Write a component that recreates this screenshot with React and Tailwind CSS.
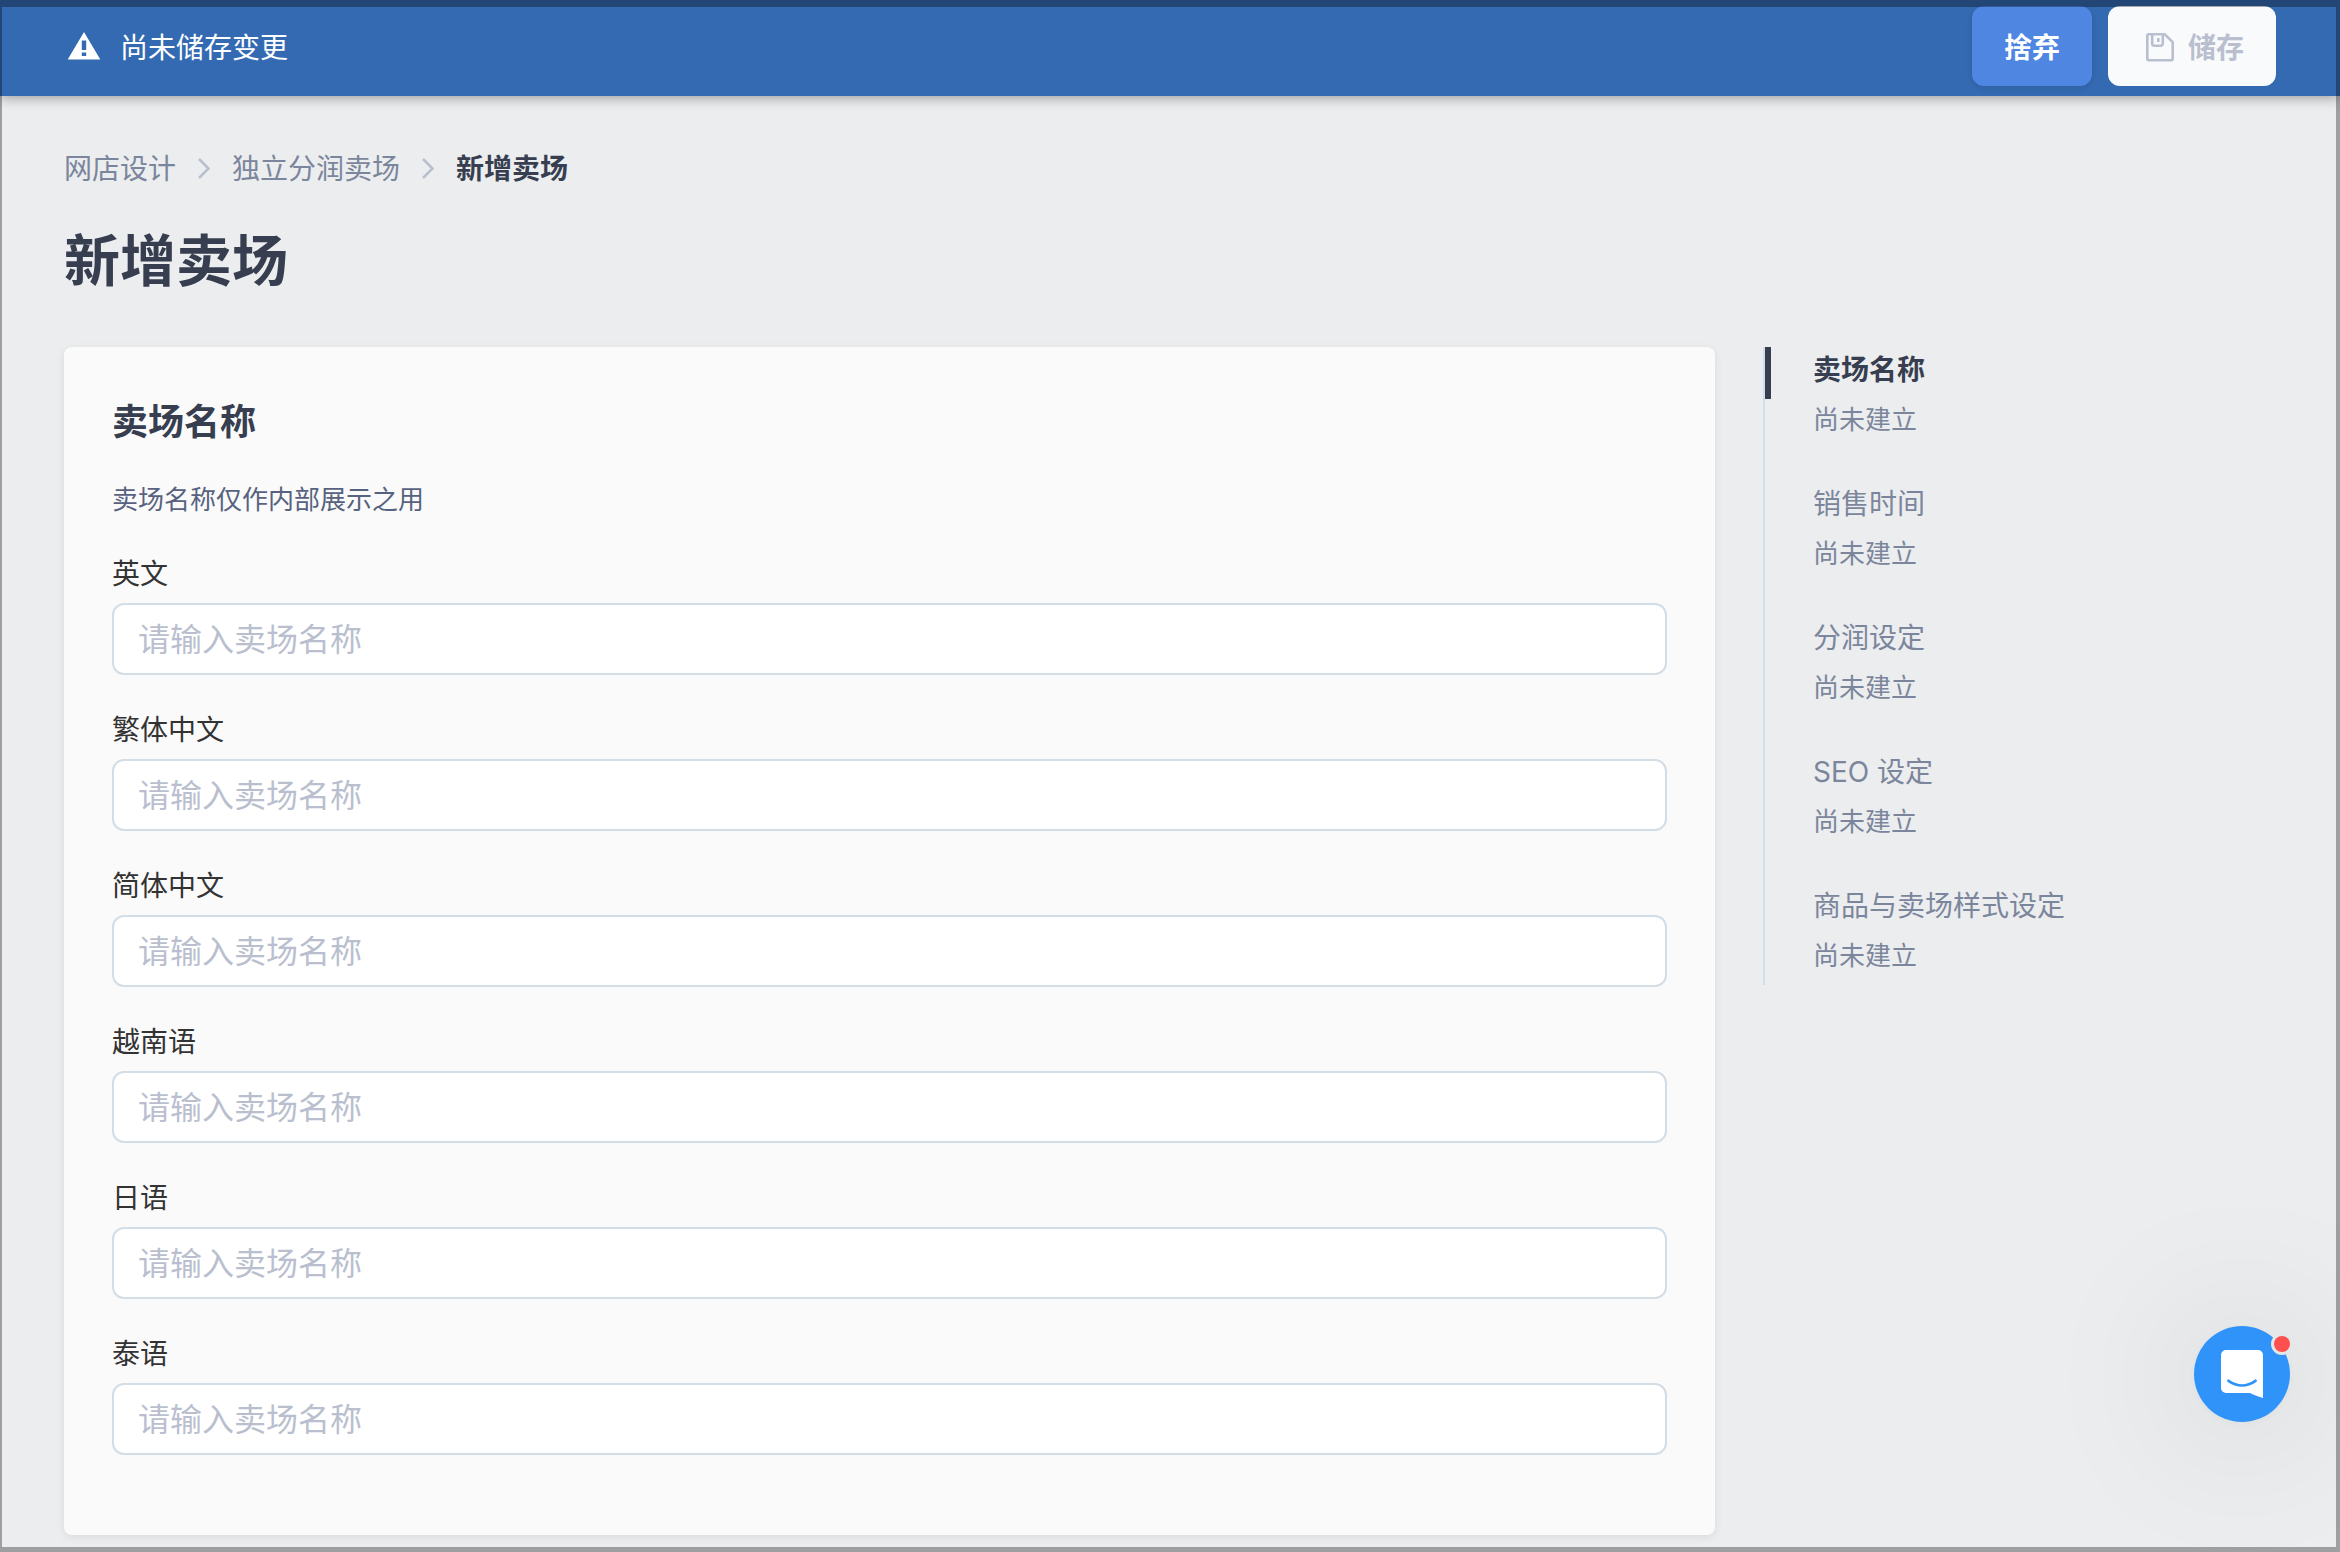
import { useState } from 'react';

// One text box per storefront language
const languages = [
  { id: 'en', label: '英文' },
  { id: 'zh-hant', label: '繁体中文' },
  { id: 'zh-hans', label: '简体中文' },
  { id: 'vi', label: '越南语' },
  { id: 'ja', label: '日语' },
  { id: 'th', label: '泰语' },
];

// Steps listed in the side navigation
const sections = [
  { id: 'name', title: '卖场名称', status: '尚未建立' },
  { id: 'time', title: '销售时间', status: '尚未建立' },
  { id: 'profit', title: '分润设定', status: '尚未建立' },
  { id: 'seo', title: 'SEO 设定', status: '尚未建立' },
  { id: 'style', title: '商品与卖场样式设定', status: '尚未建立' },
];

function WarningIcon() {
  return (
    <svg viewBox="0 0 40 40" className="size-10 shrink-0" aria-hidden="true">
      <path
        fill="#fff"
        fillRule="evenodd"
        d="M20 4 36.300 31.500H3.700L20 4ZM17.800 12.500v9.500h4.400v-9.500h-4.400Zm0 12v3.500h4.400v-3.500h-4.400Z"
      />
    </svg>
  );
}

function SaveIcon() {
  return (
    <svg
      viewBox="0 0 40 40"
      className="size-10 shrink-0"
      fill="none"
      stroke="currentColor"
      strokeWidth="2.600"
      strokeLinejoin="round"
      aria-hidden="true"
    >
      <path d="M8.800 6.300h16l7.900 7.900V30.500a1.800 1.800 0 0 1-1.800 1.800H8.800A1.800 1.800 0 0 1 7.300 30.500V8.100a1.800 1.800 0 0 1 1.500-1.800Z" />
      <path d="M12.200 6.500V15.500a2.300 2.300 0 0 0 2.300 2.300h6a2.300 2.300 0 0 0 2.300-2.300V6.500" />
      <path d="M18.300 10v4" />
    </svg>
  );
}

function Chevron() {
  return (
    <svg viewBox="0 0 56 40" className="h-10 w-14" fill="none" stroke="#b9bfce" strokeWidth="2.500" aria-hidden="true">
      <path d="m23 10 9.500 9.500L23 29" />
    </svg>
  );
}

function TopBar() {
  return (
    <header className="flex items-center justify-between bg-[#346ab2] px-16 pt-1.5 pb-2.5 shadow-[0_2px_12px_rgba(0,0,0,0.35)]">
      <p className="flex items-center gap-4 pt-1 text-[28px] leading-10 text-white">
        <WarningIcon />
        尚未储存变更
      </p>
      <div className="flex gap-4">
        <button
          type="button"
          className="h-20 rounded-xl bg-[#4e86e2] px-8 pt-1 text-[28px] leading-10 font-bold text-white shadow-[0_2px_6px_rgba(0,0,0,0.1)]"
        >
          捨弃
        </button>
        <button
          type="button"
          disabled
          className="flex h-20 items-center gap-2 rounded-xl bg-[#f9fafc] px-8 pt-1 text-[28px] leading-10 font-bold text-[#b9bfce]"
        >
          <SaveIcon />
          储存
        </button>
      </div>
    </header>
  );
}

function Breadcrumb() {
  return (
    <nav aria-label="breadcrumb">
      <ol className="flex items-center text-[28px] leading-10 text-[#7b869c]">
        <li>
          <a href="#design">网店设计</a>
        </li>
        <li>
          <Chevron />
        </li>
        <li>
          <a href="#stores">独立分润卖场</a>
        </li>
        <li>
          <Chevron />
        </li>
        <li className="font-bold text-[#373e50]">新增卖场</li>
      </ol>
    </nav>
  );
}

function NameForm() {
  const [names, setNames] = useState({});

  return (
    <section className="min-w-0 flex-1 rounded-lg bg-[#fafafa] px-12 pt-[49px] pb-20 shadow-[0_2px_8px_rgba(0,0,0,0.08)]">
      <h2 className="text-4xl leading-[52px] font-bold text-[#373e50]">卖场名称</h2>
      <p className="mt-8 text-[26px] leading-10 text-[#57627f]">卖场名称仅作内部展示之用</p>
      <div className="mt-8 flex flex-col gap-[33px]">
        {languages.map(lang => (
          <div key={lang.id} className="flex flex-col gap-[7px]">
            <label htmlFor={lang.id} className="text-[28px] leading-11 text-[#333]">
              {lang.label}
            </label>
            <input
              id={lang.id}
              type="text"
              placeholder="请输入卖场名称"
              value={names[lang.id] || ''}
              onChange={e => setNames({ ...names, [lang.id]: e.target.value })}
              className="h-18 w-full rounded-xl border-2 border-[#d2dde6] bg-white px-6 text-[32px] text-[#373e50] placeholder:text-[#b9bfce]"
            />
          </div>
        ))}
      </div>
    </section>
  );
}

function SectionNav() {
  const [active, setActive] = useState('name');

  return (
    <nav className="w-[513px] shrink-0 border-l-2 border-[#d2dde6]">
      <ul className="flex flex-col gap-8">
        {sections.map(section => (
          <li key={section.id} className="pb-2">
            <a
              href={`#${section.id}`}
              onClick={() => setActive(section.id)}
              className={`block border-l-6 pb-1.5 pl-[42px] text-[28px] leading-[46px] ${
                active === section.id
                  ? 'border-[#373e50] font-bold text-[#373e50]'
                  : 'border-transparent text-[#7b869c]'
              }`}
            >
              {section.title}
            </a>
            <p className="pl-12 text-[26px] leading-[42px] text-[#7b869c]">{section.status}</p>
          </li>
        ))}
      </ul>
    </nav>
  );
}

function ChatLauncher() {
  return (
    <button
      type="button"
      aria-label="chat"
      className="fixed right-[50px] bottom-[130px] size-24 rounded-full bg-[#3093f9] shadow-[0_2px_12px_rgba(0,0,0,0.04),0_4px_160px_rgba(0,0,0,0.18)]"
    >
      <svg viewBox="0 0 96 96" className="size-24" aria-hidden="true">
        <path fill="#fff" d="M32 24h32a5 5 0 0 1 5 5v43s-6-1.500-13-5H32a5 5 0 0 1-5-5V29a5 5 0 0 1 5-5Z" />
        <path fill="none" stroke="#3093f9" strokeWidth="2.800" strokeLinecap="round" d="M34.500 54.800c8.500 6 18.500 6 27 0" />
        <circle cx="88" cy="18" r="11" fill="#e5e6e7" />
        <circle cx="88" cy="18" r="8" fill="#ff5050" />
      </svg>
    </button>
  );
}

export default function App() {
  return (
    <div className="min-h-screen bg-[#ecedef] font-['Inter','Noto_Sans_CJK_SC',sans-serif]">
      <TopBar />
      <main className="px-16 pt-[53px] pb-4">
        <Breadcrumb />
        <h1 className="mt-8 text-[56px] leading-20 font-bold text-[#373e50]">新增卖场</h1>
        <div className="mt-[46px] flex items-start gap-12">
          <NameForm />
          <SectionNav />
        </div>
      </main>
      <ChatLauncher />
      {/* Dimmed rim around the window */}
      <div className="pointer-events-none fixed inset-0 border-t-7 border-r-4 border-b-5 border-l-2 border-black/33" />
    </div>
  );
}
